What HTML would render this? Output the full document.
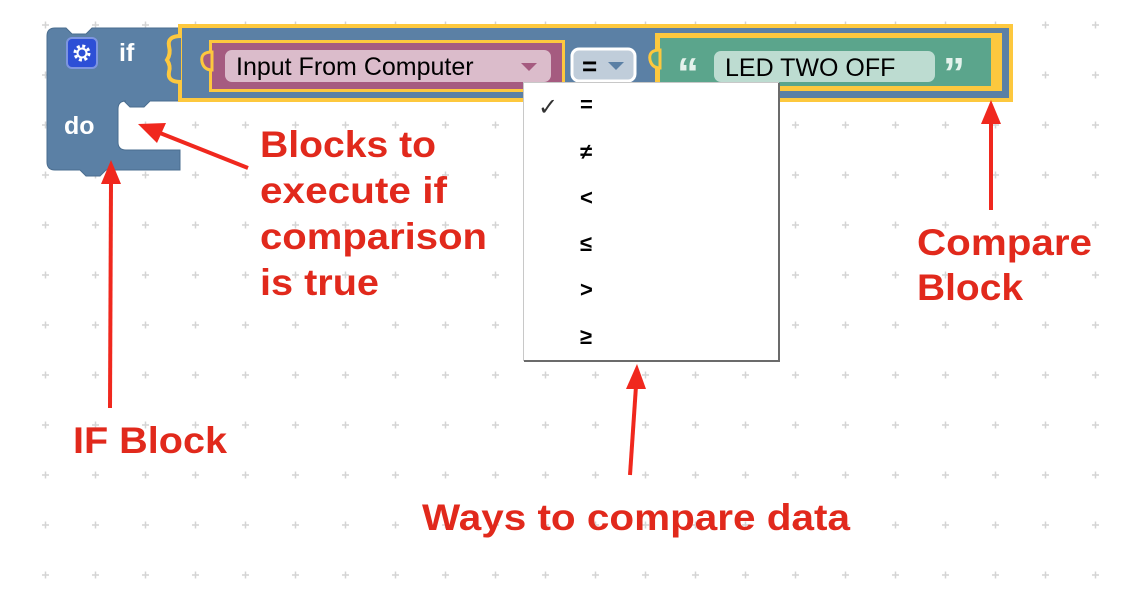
<!DOCTYPE html>
<html><head><meta charset="utf-8"><style>
html,body{margin:0;padding:0;background:#fff;}
svg{display:block;}
.a{font-family:"Liberation Sans",Arial,sans-serif;font-weight:bold;fill:#e1291c;font-size:37px;}
.b{font-family:"Liberation Sans",Arial,sans-serif;}
</style></head><body>
<svg width="1134" height="602" viewBox="0 0 1134 602" xmlns="http://www.w3.org/2000/svg">
<defs>
<pattern id="g" x="0" y="0" width="50" height="50" patternUnits="userSpaceOnUse">
<path d="M42 25h7M45.5 21.5v7" stroke="#d4d4d4" stroke-width="1.5"/>
</pattern>
</defs>
<rect x="0" y="0" width="1134" height="602" fill="url(#g)"/>

<!-- IF block -->
<path d="M55 28 H66 l6 6 h14 l6 -6 H182 V101 H150 l-6 6 h-14 l-6 -6 H126 q-8 0 -8 8 V142 q0 8 8 8 H180 V170 H106 l-6 6 h-14 l-6 -6 H55 q-8 0 -8 -8 V36 q0 -8 8 -8 Z" fill="#5b80a5" stroke="#4a6d8f" stroke-width="1"/>
<rect x="67" y="38" width="30" height="30" rx="5" fill="#2d4fd6" stroke="#7d95e0" stroke-width="2"/>
<circle cx="82" cy="53" r="7" fill="none" stroke="#fff" stroke-width="3" stroke-dasharray="3 2.5"/>
<circle cx="82" cy="53" r="4.5" fill="none" stroke="#fff" stroke-width="2"/>
<text x="119" y="61" class="b" font-size="25" font-weight="bold" fill="#fff">if</text>
<text x="64" y="134" class="b" font-size="25" font-weight="bold" fill="#fff">do</text>

<!-- compare block (selected, yellow outline) -->
<rect x="180" y="26" width="831" height="74" fill="#5b80a5" stroke="#fdc83e" stroke-width="4"/>
<path d="M181 36 q-14 0 -12 10 q2 8 -2 14 q4 6 2 12 q-2 10 12 10" fill="#5b80a5" stroke="#fdc83e" stroke-width="4"/>
<!-- input block -->
<rect x="209" y="40" width="356" height="52" fill="#fdc83e"/>
<rect x="212" y="43" width="350" height="46" fill="#a55b80"/>
<path d="M212 52 q-12 0 -10 10 q2 8 10 8 Z" fill="#a55b80" stroke="#fdc83e" stroke-width="3"/>
<rect x="225" y="50" width="326" height="32" rx="7" fill="#dbbccb"/>
<text x="236" y="75" class="b" font-size="25" fill="#000">Input From Computer</text>
<path d="M521 63 h16 l-8 8 Z" fill="#a55b80"/>
<!-- = dropdown -->
<rect x="572" y="49" width="63" height="32" rx="7" fill="#c0cdda" stroke="#fff" stroke-width="3"/>
<text x="582" y="75" class="b" font-size="26" font-weight="bold" fill="#000">=</text>
<path d="M608 62 h16 l-8 8 Z" fill="#5b80a5"/>
<!-- text block -->
<rect x="655" y="33" width="347" height="58" fill="#fdc83e"/>
<rect x="660" y="38" width="331" height="48" fill="#5ba58c"/>
<path d="M660 50 q-12 0 -10 10 q2 8 10 8 Z" fill="#5ba58c" stroke="#fdc83e" stroke-width="3"/>
<text x="677" y="88" class="b" font-size="44" font-weight="bold" fill="#e4f2ec">“</text>
<rect x="714" y="51" width="221" height="31" rx="7" fill="#bddcd1"/>
<text x="725" y="76" class="b" font-size="25" fill="#000">LED TWO OFF</text>
<text x="943" y="88" class="b" font-size="44" font-weight="bold" fill="#e4f2ec">”</text>

<!-- dropdown menu -->
<rect x="523.5" y="82.5" width="255" height="278" fill="#fff" stroke="#c8c8c8" stroke-width="1"/>
<path d="M779 83 V361 H524" fill="none" stroke="#6b6b6b" stroke-width="2"/>
<text x="538" y="115" class="b" font-size="24" fill="#333">✓</text>
<g class="b" font-size="22" font-weight="bold" fill="#000">
<text x="580" y="112">=</text>
<text x="580" y="159">≠</text>
<text x="580" y="205">&lt;</text>
<text x="580" y="251">≤</text>
<text x="580" y="297">&gt;</text>
<text x="580" y="344">≥</text>
</g>

<!-- arrows -->
<g stroke="#f0281e" stroke-width="4" fill="#f0281e">
<line x1="248" y1="168" x2="160" y2="133"/>
<path d="M138 124 l28 -1 l-9 20 Z" stroke="none"/>
<line x1="110" y1="408" x2="111" y2="182"/>
<path d="M111 160 l10 24 h-20 Z" stroke="none"/>
<line x1="991" y1="210" x2="991" y2="122"/>
<path d="M991 100 l10 24 h-20 Z" stroke="none"/>
<line x1="630" y1="475" x2="636" y2="386"/>
<path d="M637 364 l9 25 h-20 Z" stroke="none"/>
</g>

<!-- labels -->
<text class="a" x="260" y="157" textLength="176" lengthAdjust="spacingAndGlyphs">Blocks to</text>
<text class="a" x="260" y="203" textLength="187" lengthAdjust="spacingAndGlyphs">execute if</text>
<text class="a" x="260" y="249" textLength="227" lengthAdjust="spacingAndGlyphs">comparison</text>
<text class="a" x="260" y="295" textLength="119" lengthAdjust="spacingAndGlyphs">is true</text>
<text class="a" x="917" y="255" textLength="175" lengthAdjust="spacingAndGlyphs">Compare</text>
<text class="a" x="917" y="300" textLength="106" lengthAdjust="spacingAndGlyphs">Block</text>
<text class="a" x="73" y="453" textLength="154" lengthAdjust="spacingAndGlyphs">IF Block</text>
<text class="a" x="422" y="530" textLength="428" lengthAdjust="spacingAndGlyphs">Ways to compare data</text>
</svg>
</body></html>
